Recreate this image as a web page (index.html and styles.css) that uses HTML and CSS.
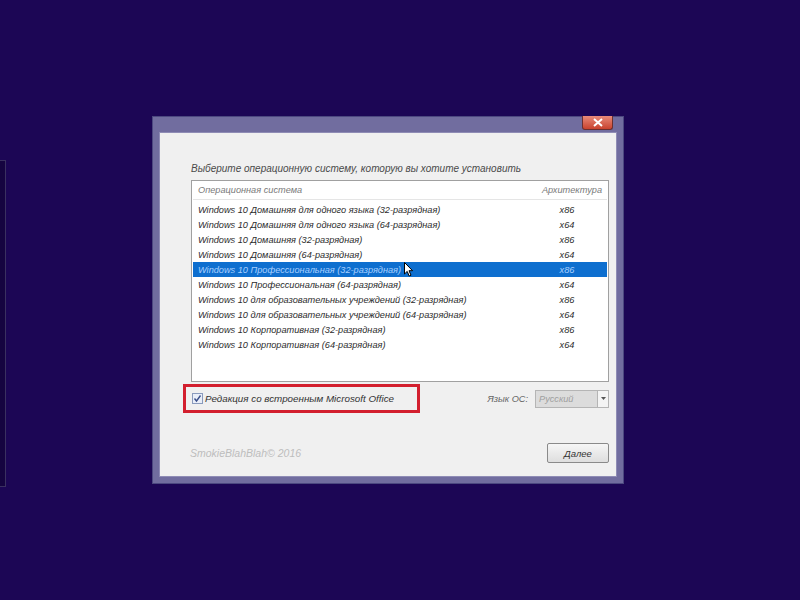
FILE: index.html
```html
<!DOCTYPE html>
<html lang="ru">
<head>
    <meta charset="UTF-8">
    <title>Выбор операционной системы</title>
    <link rel="stylesheet" href="styles.css">
</head>
<body>
    <div class="behind"></div>
    <div class="window">
        <div class="titlebar">
            <div class="close">
                <svg width="10" height="9" viewBox="0 0 10 9"><path d="M1 1 L9 8 M9 1 L1 8" stroke="#fff" stroke-width="2"/></svg>
            </div>
        </div>
        <div class="client">
            <div class="prompt">Выберите операционную систему, которую вы хотите установить</div>
            <div class="list">
                <div class="row head">
                    <span class="os">Операционная система</span>
                    <span class="arch">Архитектура</span>
                </div>
                <div class="row"><span class="os">Windows 10 Домашняя для одного языка (32-разрядная)</span><span class="arch">x86</span></div>
                <div class="row"><span class="os">Windows 10 Домашняя для одного языка (64-разрядная)</span><span class="arch">x64</span></div>
                <div class="row"><span class="os">Windows 10 Домашняя (32-разрядная)</span><span class="arch">x86</span></div>
                <div class="row"><span class="os">Windows 10 Домашняя (64-разрядная)</span><span class="arch">x64</span></div>
                <div class="row selected"><span class="os">Windows 10 Профессиональная (32-разрядная)</span><span class="arch">x86</span>
                    <svg class="cursor" width="10" height="16" viewBox="0 0 10 16"><path d="M0.5 0.5 L0.5 12 L3.2 9.4 L5.2 14 L7 13.2 L5 8.7 L8.6 8.7 Z" fill="#fff" stroke="#000" stroke-width="1"/></svg>
                </div>
                <div class="row"><span class="os">Windows 10 Профессиональная (64-разрядная)</span><span class="arch">x64</span></div>
                <div class="row"><span class="os">Windows 10 для образовательных учреждений (32-разрядная)</span><span class="arch">x86</span></div>
                <div class="row"><span class="os">Windows 10 для образовательных учреждений (64-разрядная)</span><span class="arch">x64</span></div>
                <div class="row"><span class="os">Windows 10 Корпоративная (32-разрядная)</span><span class="arch">x86</span></div>
                <div class="row"><span class="os">Windows 10 Корпоративная (64-разрядная)</span><span class="arch">x64</span></div>
            </div>
            <div class="options">
                <div class="office">
                    <span class="check">
                        <svg width="9" height="9" viewBox="0 0 9 9"><path d="M1.5 4.5 L3.5 7 L7.5 1.5" fill="none" stroke="#3a4f8a" stroke-width="1.4"/></svg>
                    </span>
                    <span>Редакция со встроенным Microsoft Office</span>
                </div>
                <div class="lang">
                    <span>Язык ОС:</span>
                    <div class="combo">
                        <span class="value">Русский</span>
                        <span class="drop">
                            <svg width="5" height="3" viewBox="0 0 5 3"><path d="M0 0 L5 0 L2.5 3 Z" fill="#555"/></svg>
                        </span>
                    </div>
                </div>
            </div>
            <div class="footer">
                <span class="copy">SmokieBlahBlah© 2016</span>
                <button class="next">Далее</button>
            </div>
        </div>
    </div>
</body>
</html>
```

FILE: styles.css
```css
body {
    margin: 0;
    width: 800px;
    height: 600px;
    background-color: #1c0655;
    font-family: "Liberation Sans", Arial, sans-serif;
    font-size: 9.2px;
    font-style: italic;
    position: relative;
    overflow: hidden;
}
.behind {
    position: absolute;
    left: -4px;
    top: 160px;
    width: 8px;
    height: 325px;
    border: 1px solid #3a3060;
    background-color: #150440;
}
.window {
    position: absolute;
    left: 152px;
    top: 116px;
    width: 472px;
    height: 368px;
    background-color: #716d9f;
    border: 1px solid #4c4880;
    box-sizing: border-box;
    padding: 0 6px 6px 6px;
    display: flex;
    flex-direction: column;
}
.titlebar {
    height: 15px;
    display: flex;
    justify-content: flex-end;
    padding-right: 4px;
}
.close {
    width: 29px;
    height: 13px;
    margin-top: -1px;
    background: linear-gradient(#e88a7a, #c9432e);
    border: 1px solid #6b3030;
    border-top: none;
    border-radius: 0 0 3px 3px;
    display: flex;
    align-items: center;
    justify-content: center;
}
.client {
    flex: 1;
    background-color: #f0f0f0;
    border: 1px solid #8f8cb5;
    padding: 30px 8px 0 31px;
    color: #555;
}
.prompt {
    font-size: 10px;
    color: #4a4a4a;
    margin-bottom: 6px;
}
.list {
    width: 418px;
    height: 202px;
    box-sizing: border-box;
    background-color: #fff;
    border: 1px solid #a0a0a0;
    padding: 0 1px;
}
.row {
    height: 15px;
    display: flex;
    align-items: center;
    color: #2c2c2c;
    padding-left: 5px;
    position: relative;
}
.row.head {
    height: 18px;
    color: #7a7a7a;
    margin-bottom: 2px;
    border-bottom: 1px solid #e5e5e5;
}
.os {
    flex: 1;
}
.arch {
    width: 70px;
    text-align: center;
    padding-right: 5px;
}
.head .arch {
    text-align: right;
    padding-right: 5px;
}
.row.selected {
    background-color: #0e6fcf;
    color: #a8d0ff;
}
.cursor {
    position: absolute;
    left: 211px;
    top: 0;
}
.options {
    display: flex;
    align-items: center;
    justify-content: space-between;
    width: 418px;
    margin-top: 2px;
}
.office {
    margin-left: -8px;
    width: 237px;
    height: 29px;
    box-sizing: border-box;
    border: 3px solid #d31f2e;
    display: flex;
    align-items: center;
    padding-left: 6px;
    gap: 2px;
    color: #333;
    font-size: 9.8px;
}
.check {
    width: 9px;
    height: 9px;
    border: 1px solid #8a9bbd;
    background: #e9eef8;
    display: flex;
}
.lang {
    display: flex;
    align-items: center;
    gap: 7px;
    color: #666;
}
.combo {
    width: 74px;
    height: 18px;
    box-sizing: border-box;
    border: 1px solid #b5b5b5;
    background-color: #dcdcdc;
    display: flex;
}
.combo .value {
    flex: 1;
    color: #a0a0a0;
    padding: 3px 0 0 3px;
}
.drop {
    width: 10px;
    border-left: 1px solid #b5b5b5;
    background-color: #f4f4f4;
    display: flex;
    align-items: center;
    justify-content: center;
}
.footer {
    display: flex;
    justify-content: space-between;
    align-items: center;
    width: 418px;
    margin-top: 30px;
}
.copy {
    color: #bdbdbd;
    font-size: 10.5px;
    margin-left: -1px;
}
.next {
    width: 62px;
    height: 20px;
    font-family: "Liberation Sans", Arial, sans-serif;
    font-style: italic;
    font-size: 9.5px;
    color: #333;
    background: linear-gradient(#f6f6f6, #dedede);
    border: 1px solid #8a8a8a;
    border-radius: 2px;
    padding: 0;
}
```
